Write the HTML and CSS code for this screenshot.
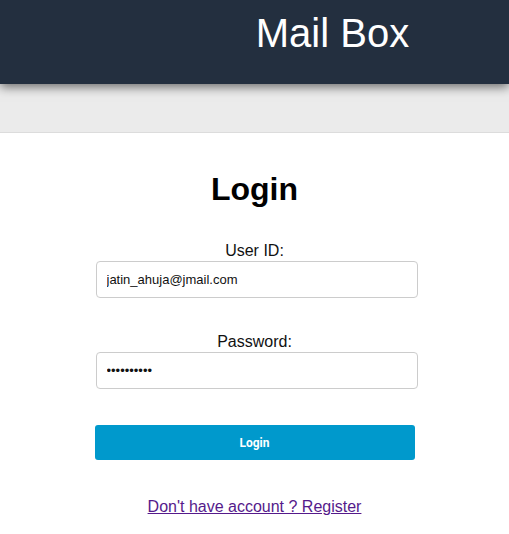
FILE: index.html
```html
<!DOCTYPE html>
<html>
<head>
<meta charset="utf-8">
<link rel="stylesheet" href="styles.css">
</head>
<body>
<header class="topbar">
  <h1 class="brand">Mail Box</h1>
</header>
<div class="subbar"></div>
<main class="page">
  <h2 class="title">Login</h2>
  <form class="form">
    <label class="label" for="uid">User ID:</label>
    <input class="field" id="uid" type="text" value="jatin_ahuja@jmail.com">
    <label class="label label-pw" for="pw">Password:</label>
    <input class="field" id="pw" type="password" value="1234567890">
    <button class="btn" type="button">Login</button>
  </form>
  <a class="reg" href="#">Don't have account ? Register</a>
</main>
</body>
</html>
```
FILE: styles.css
```css
html, body {
  margin: 0;
  padding: 0;
  background: #fff;
  font-family: "Liberation Sans", Arial, sans-serif;
}
.topbar {
  position: relative;
  z-index: 2;
  height: 84px;
  background: #232f3f;
  box-shadow: 0 3px 10px rgba(0,0,0,0.55);
  box-sizing: border-box;
  padding: 10px 0 0 156px;
  text-align: center;
}
.brand {
  margin: 0;
  font-size: 40px;
  font-weight: normal;
  line-height: 46px;
  color: #fff;
}
.subbar {
  height: 48px;
  background: #ebebeb;
  border-bottom: 1px solid #dcdcdc;
}
.page {
  display: flex;
  flex-direction: column;
  align-items: center;
}
.title {
  margin: 38px 0 0;
  font-size: 32px;
  font-weight: bold;
  line-height: 37px;
  color: #000;
}
.form {
  width: 320px;
  margin-top: 34px;
  display: flex;
  flex-direction: column;
}
.label {
  display: block;
  text-align: center;
  font-size: 16px;
  line-height: 18px;
  color: #111;
  margin-bottom: 1px;
}
.label-pw {
  margin-top: 35px;
}
.field {
  box-sizing: border-box;
  width: 322px;
  height: 37px;
  margin-left: 1px;
  padding: 0 10px;
  border: 1px solid #cccccc;
  border-radius: 4px;
  font-family: "Liberation Sans", Arial, sans-serif;
  font-size: 13px;
  color: #111;
  background: #fff;
  outline: none;
}
.btn {
  width: 320px;
  height: 35px;
  margin-top: 36px;
  border: none;
  border-radius: 3px;
  background: #0099cc;
  color: #fff;
  font-family: Roboto, "Liberation Sans", Arial, sans-serif;
  font-size: 12px;
  font-weight: bold;
}
.reg {
  margin-top: 38px;
  font-size: 16px;
  line-height: 18px;
  color: #551a8b;
  text-decoration: underline;
}
```
